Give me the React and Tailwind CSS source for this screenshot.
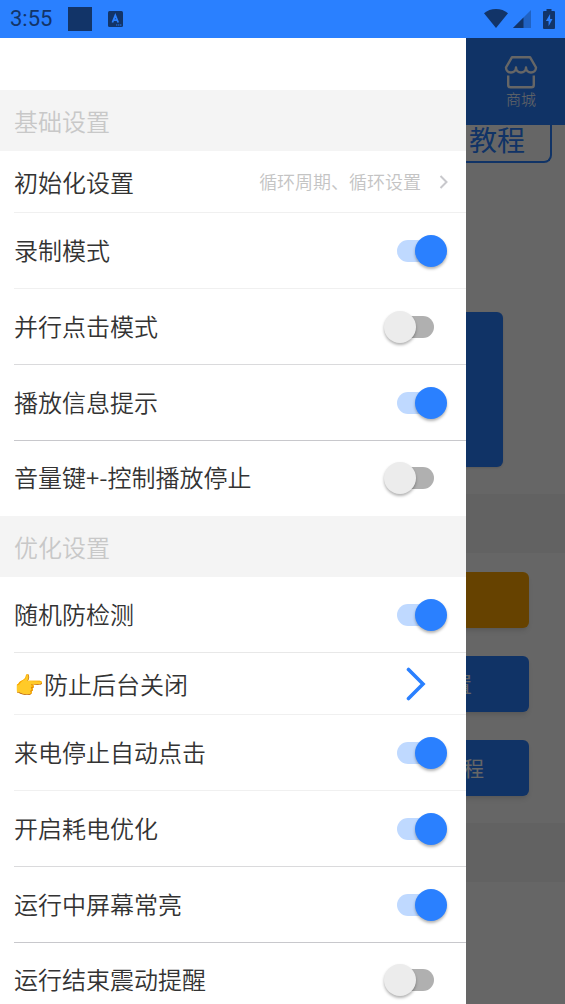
import React, { useState } from "react";

// Grupos de ajustes que se muestran en el menú lateral
const groups = [
  {
    title: "基础设置",
    items: [
      { id: "init", label: "初始化设置", type: "link", hint: "循环周期、循环设置", border: "border-[#f0f0f0]" },
      { id: "record", label: "录制模式", type: "switch", on: true, border: "border-[#f0f0f0]" },
      { id: "parallel", label: "并行点击模式", type: "switch", on: false, border: "border-[#dadadc]" },
      { id: "playTips", label: "播放信息提示", type: "switch", on: true, border: "border-[#c8c8cc]" },
      { id: "volume", label: "音量键+-控制播放停止", type: "switch", on: false, border: "border-transparent" },
    ],
  },
  {
    title: "优化设置",
    items: [
      { id: "random", label: "随机防检测", type: "switch", on: true, border: "border-[#e8e8e8]" },
      { id: "keepAlive", label: "👉防止后台关闭", type: "arrow", border: "border-[#f0f0f0]" },
      { id: "call", label: "来电停止自动点击", type: "switch", on: true, border: "border-[#f0f0f0]" },
      { id: "battery", label: "开启耗电优化", type: "switch", on: true, border: "border-[#dadadc]" },
      { id: "screenOn", label: "运行中屏幕常亮", type: "switch", on: true, border: "border-[#c8c8cc]" },
      { id: "vibrate", label: "运行结束震动提醒", type: "switch", on: false, border: "border-transparent" },
    ],
  },
];

const StatusBar = () => (
  <header className="flex h-[38px] shrink-0 items-center justify-between bg-[#2a80ff] px-[10px] pb-px text-[#123468]">
    <div className="flex items-center">
      <span className="font-[Roboto,sans-serif] text-[22px] leading-6">3:55</span>
      <span className="ml-4 size-6 bg-[#123468]"></span>
      <svg className="ml-4" width="15" height="16" viewBox="0 0 15 16">
        <rect width="15" height="16" rx="1.5" fill="#123468" />
        <path d="M4.4 11.5 7.3 4.4 10.2 11.5M5.5 9.2h3.6" fill="none" stroke="#2a80ff" strokeWidth="1.8" />
        <path d="M8 14h1.4M10 14h1.4M12 14h1.4" stroke="#2a80ff" strokeWidth="1.4" opacity=".6" />
      </svg>
    </div>
    <div className="flex items-center">
      {/* Wifi */}
      <svg width="24" height="19" viewBox="0 0 24 19" fill="currentColor">
        <path d="M12 19 0 4.2C3.2 1.5 7.4 0 12 0s8.8 1.5 12 4.2z" />
      </svg>
      {/* Señal */}
      <svg className="ml-[5px]" width="18" height="18" viewBox="0 0 18 18" fill="currentColor">
        <path d="M18 0v18H0z" opacity=".4" />
        <path d="M10.5 7.5V18H0z" />
      </svg>
      {/* Batería */}
      <svg className="ml-3" width="12" height="20" viewBox="0 0 12 20">
        <path d="M3.5 0h5v2H11q1 0 1 1v16q0 1-1 1H1q-1 0-1-1V3q0-1 1-1h2.5z" fill="currentColor" />
        <path d="M7.1 5 2.9 12h2.700v5.200L9.500 10H7.100z" fill="#2a80ff" />
      </svg>
    </div>
  </header>
);

// Interruptor estilo Material
const Switch = ({ id, checked, onChange }) => (
  <input
    id={id}
    type="checkbox"
    checked={checked}
    onChange={onChange}
    className="relative h-8 w-[63px] shrink-0 appearance-none before:absolute before:top-[5px] before:left-[13px] before:h-[22px] before:w-[37px] before:rounded-full before:bg-[#b0b0b0] checked:before:bg-[#bfd9ff] after:absolute after:top-0 after:left-0 after:size-8 after:rounded-full after:bg-[#ececec] after:shadow-[0_2px_3px_rgba(0,0,0,0.3)] checked:after:left-[31px] checked:after:bg-[#2a80ff]"
  />
);

const Row = ({ item, checked, onToggle }) => {
  if (item.type === "switch") {
    return (
      <div className={`ml-[14px] flex h-[76px] items-center justify-between border-b pr-[19px] last:h-[75px] ${item.border}`}>
        <label htmlFor={item.id} className="pb-[2px]">{item.label}</label>
        <Switch id={item.id} checked={checked} onChange={onToggle} />
      </div>
    );
  }

  return (
    <div className={`ml-[14px] border-b ${item.border}`}>
      <button type="button" className="flex h-[61px] w-full items-center justify-between pr-[18px] text-left">
        <span>{item.label}</span>
        {item.type === "link" ? (
          <span className="flex items-center gap-[18px] text-lg text-[#c4c4c4]">
            <span className="pb-[2px]">{item.hint}</span>
            <svg width="9" height="14" viewBox="0 0 9 14" fill="none" stroke="#c8c8cc" strokeWidth="2">
              <path d="m1.5 1 6 6-6 6" />
            </svg>
          </span>
        ) : (
          <svg className="mr-[22px]" width="20" height="34" viewBox="0 0 20 34" fill="none" stroke="#2a80ff" strokeWidth="3.6" strokeLinecap="round">
            <path d="m2.5 2.5 14.5 14.5L2.5 31.5" />
          </svg>
        )}
      </button>
    </div>
  );
};

// Pantalla principal que queda detrás del menú
const MainScreen = () => (
  <div className="flex h-full flex-col bg-white">
    <div className="flex h-[87px] shrink-0 justify-end bg-[#2a80ff] pt-[17px] pr-[27px] text-white">
      <button type="button" className="flex flex-col items-center">
        <svg width="34" height="34" viewBox="0 0 34 34" fill="none" stroke="currentColor" strokeWidth="2.4" strokeLinejoin="round">
          <path d="M8 2.2h18l6 10.3a5 5 0 0 1-10 0 5 5 0 0 1-10 0 5 5 0 0 1-10 0z" />
          <path d="M4.2 20.5V30q0 2.300 2.300 2.300h21q2.300 0 2.300-2.300v-9.500" />
        </svg>
        <span className="text-[15px] leading-5 font-light">商城</span>
      </button>
    </div>
    <div className="mr-[13px] flex h-[38px] shrink-0 justify-end rounded-b-lg border-2 border-t-0 border-[#2a80ff] pr-[25px] text-[28px] leading-7 text-[#2a80ff]">
      教程
    </div>
    <div className="mx-[62px] mt-[149px] h-[155px] shrink-0 rounded-md bg-[#2a80ff] shadow"></div>
    <div className="mt-[27px] h-[59px] shrink-0 bg-[#f4f4f4]"></div>
    <div className="flex shrink-0 flex-col gap-7 px-9 py-[19px] text-[21px] text-white">
      <button type="button" className="h-14 rounded-md bg-[#ffa500] shadow-md"></button>
      <button type="button" className="h-14 rounded-md bg-[#2a80ff] pr-[57px] text-right shadow-md">置</button>
      <button type="button" className="h-14 rounded-md bg-[#2a80ff] pr-[45px] text-right shadow-md">程</button>
    </div>
    <div className="mt-2 h-[59px] shrink-0 bg-[#f4f4f4]"></div>
  </div>
);

const App = () => {
  // Estado de cada interruptor por id
  const [values, setValues] = useState(() =>
    Object.fromEntries(
      groups.flatMap((group) => group.items).map((item) => [item.id, Boolean(item.on)])
    )
  );

  const toggle = (id) => setValues((prev) => ({ ...prev, [id]: !prev[id] }));

  return (
    <div className="flex h-screen flex-col overflow-hidden font-['Noto_Sans_CJK_SC',sans-serif]">
      <StatusBar />
      <div className="relative min-h-0 flex-1">
        <MainScreen />
        {/* Fondo oscuro */}
        <div className="absolute inset-0 bg-black/60"></div>
        {/* Menú lateral */}
        <aside className="absolute inset-y-0 left-0 w-[82.5%] overflow-hidden bg-white pt-[52px] text-2xl font-[350] text-[#333]">
          {groups.map((group) => (
            <section key={group.title}>
              <h2 className="flex h-[61px] items-center bg-[#f4f4f4] pl-[14px] text-[#c8c8c8]">{group.title}</h2>
              {group.items.map((item) => (
                <Row
                  key={item.id}
                  item={item}
                  checked={values[item.id]}
                  onToggle={() => toggle(item.id)}
                />
              ))}
            </section>
          ))}
        </aside>
      </div>
    </div>
  );
};

export default App;
